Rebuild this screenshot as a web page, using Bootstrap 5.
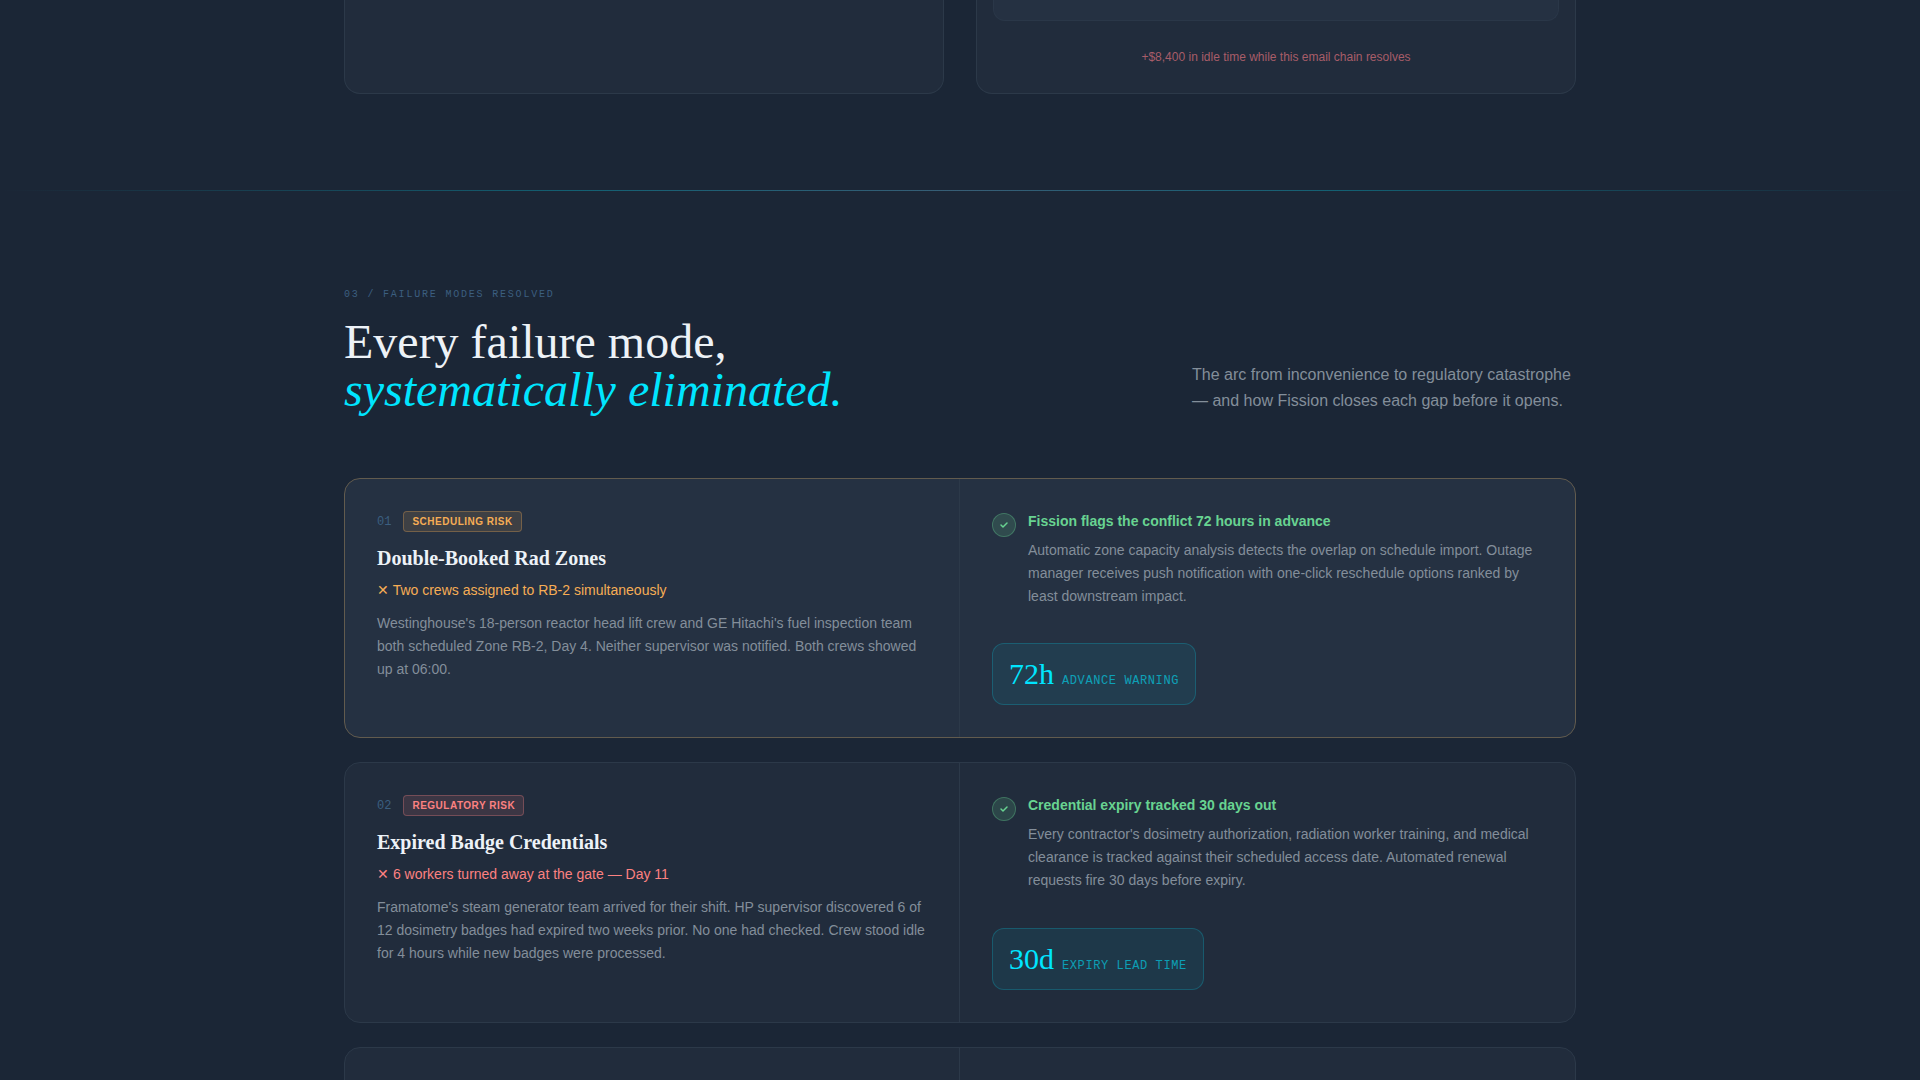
<!DOCTYPE html>
<html lang="en" data-bs-theme="dark">
<head>
<meta charset="utf-8">
<meta name="viewport" content="width=device-width, initial-scale=1">
<title>Fission – Failure modes resolved</title>
<link href="https://cdn.jsdelivr.net/npm/bootstrap@5.3.0/dist/css/bootstrap.min.css" rel="stylesheet">
<style>
  :root {
    --ink: #1b2636;
    --cyan: #00e5ff;
    --amber: #f6ad55;
    --red: #fc8181;
    --green: #68d391;
    --steel: #3b5f80;
    --muted: #838e9a;
  }
  html, body { overflow: hidden; height: 100vh; }
  body {
    background: var(--ink);
    color: #edf2f7;
    font-family: "Liberation Sans", Arial, sans-serif;
  }
  .serif { font-family: "Liberation Serif", "Times New Roman", serif; }
  .mono { font-family: "Liberation Mono", "Courier New", monospace; }
  .page-wrap { max-width: 1280px; padding: 0 24px; margin: 0 auto; }
  .section-pad { padding-bottom: 96px; }

  .panel {
    background: #212c3c;
    border: 1px solid #2c3949;
    border-radius: 16px;
  }
  .panel-pair { gap: 32px; }
  .compare-panel { border-top: 0; border-radius: 0 0 16px 16px; min-height: 94px; padding: 0 16px 28px; }
  .mail-box {
    height: 21px;
    background: #253142;
    border: 1px solid #2a3748;
    border-top: 0;
    border-radius: 0 0 12px 12px;
  }
  .idle-cost { font-size: 12px; line-height: 16px; margin-top: 28px; color: #a85d69; }

  .glow-line {
    height: 1px;
    background: linear-gradient(90deg, transparent, rgba(0, 229, 255, .3) 30%, rgba(74, 130, 160, .6) 50%, rgba(0, 229, 255, .3) 70%, transparent);
  }

  .failures { padding-top: 96px; }
  .eyebrow { font-size: 10px; line-height: 15px; letter-spacing: .18em; color: var(--steel); }
  .headline { font-size: 48px; line-height: 48px; color: #edf2f7; }
  .headline em { color: var(--cyan); }
  .intro { width: 384px; font-size: 16px; line-height: 26px; color: var(--muted); }
  .failure-head { margin-bottom: 64px; }

  .failure-list { gap: 24px; }
  .failure.active { background: #253142; border-color: #625b4e; }
  .half { padding: 32px; }
  .half-left { border-right: 1px solid #2c3949; }
  .tag-row, .fix-row { gap: 12px; }
  .num { font-size: 12px; line-height: 16px; color: var(--steel); }
  .risk {
    font-size: 10px; line-height: 15px; font-weight: 700; letter-spacing: .05em;
    padding: 2px 8px; border: 1px solid; border-radius: 4px;
  }
  .risk-amber { color: var(--amber); background: rgba(246, 173, 85, .12); border-color: rgba(246, 173, 85, .3); }
  .risk-red { color: var(--red); background: rgba(252, 129, 129, .12); border-color: rgba(252, 129, 129, .3); }
  .case-title { font-size: 20px; line-height: 28px; font-weight: 700; margin: 12px 0 8px; color: #edf2f7; }
  .case-line { font-size: 14px; line-height: 20px; margin-bottom: 12px; }
  .line-amber { color: var(--amber); }
  .line-red { color: var(--red); }
  .copy { font-size: 14px; line-height: 1.65; color: var(--muted); }
  .tick {
    width: 24px; height: 24px; margin-top: 2px;
    background: rgba(104, 211, 145, .16);
    border: 1px solid rgba(104, 211, 145, .32);
  }
  .fix-title { font-size: 14px; line-height: 20px; font-weight: 700; color: var(--green); margin-bottom: 8px; }
  .stat {
    margin-top: 35px; padding: 12px 16px; gap: 8px;
    background: rgba(0, 229, 255, .07);
    border: 1px solid rgba(0, 229, 255, .2);
    border-radius: 12px;
  }
  .stat-value { font-size: 30px; line-height: 36px; color: var(--cyan); }
  .stat-label { font-size: 12px; line-height: 16px; letter-spacing: .05em; color: rgba(0, 229, 255, .6); }
</style>
</head>
<body>
<section class="section-pad">
  <div class="page-wrap">
    <div class="panel-pair d-flex">
      <div class="w-50 panel compare-panel"></div>
      <div class="w-50 panel compare-panel">
        <div class="mail-box"></div>
        <p class="idle-cost text-center mb-0">+$8,400 in idle time while this email chain resolves</p>
      </div>
    </div>
  </div>
</section>
<div class="glow-line"></div>

<section class="failures">
  <div class="page-wrap">
    <header class="failure-head d-flex justify-content-between align-items-end">
      <div>
        <div class="eyebrow mono text-uppercase mb-3">03 / Failure modes resolved</div>
        <h2 class="headline serif fw-normal mb-0">Every failure mode,<br><em>systematically eliminated.</em></h2>
      </div>
      <p class="intro mb-0">The arc from inconvenience to regulatory catastrophe — and how Fission closes each gap before it opens.</p>
    </header>

    <div class="failure-list d-flex flex-column">
      <article class="failure active panel">
        <div class="row g-0">
          <div class="col-6 half half-left">
            <div class="tag-row d-flex align-items-center">
              <span class="num mono">01</span>
              <span class="risk risk-amber text-uppercase">Scheduling risk</span>
            </div>
            <h3 class="case-title serif">Double-Booked Rad Zones</h3>
            <p class="case-line line-amber">✕ Two crews assigned to RB-2 simultaneously</p>
            <p class="copy mb-0">Westinghouse's 18-person reactor head lift crew and GE Hitachi's fuel inspection team both scheduled Zone RB-2, Day 4. Neither supervisor was notified. Both crews showed up at 06:00.</p>
          </div>
          <div class="col-6 half d-flex flex-column align-items-start">
            <div class="fix-row d-flex">
              <span class="tick rounded-circle d-flex align-items-center justify-content-center flex-shrink-0">
                <svg width="10" height="10" viewBox="0 0 10 10" fill="none" stroke="#68d391" stroke-width="1.5" stroke-linecap="round" stroke-linejoin="round" aria-hidden="true"><path d="M2 5l2 2 4-4"/></svg>
              </span>
              <div>
                <h4 class="fix-title">Fission flags the conflict 72 hours in advance</h4>
                <p class="copy mb-0">Automatic zone capacity analysis detects the overlap on schedule import. Outage manager receives push notification with one-click reschedule options ranked by least downstream impact.</p>
              </div>
            </div>
            <div class="stat d-inline-flex align-items-baseline">
              <span class="stat-value serif">72h</span>
              <span class="stat-label mono text-uppercase">Advance warning</span>
            </div>
          </div>
        </div>
      </article>

      <article class="failure panel">
        <div class="row g-0">
          <div class="col-6 half half-left">
            <div class="tag-row d-flex align-items-center">
              <span class="num mono">02</span>
              <span class="risk risk-red text-uppercase">Regulatory risk</span>
            </div>
            <h3 class="case-title serif">Expired Badge Credentials</h3>
            <p class="case-line line-red">✕ 6 workers turned away at the gate — Day 11</p>
            <p class="copy mb-0">Framatome's steam generator team arrived for their shift. HP supervisor discovered 6 of 12 dosimetry badges had expired two weeks prior. No one had checked. Crew stood idle for 4 hours while new badges were processed.</p>
          </div>
          <div class="col-6 half d-flex flex-column align-items-start">
            <div class="fix-row d-flex">
              <span class="tick rounded-circle d-flex align-items-center justify-content-center flex-shrink-0">
                <svg width="10" height="10" viewBox="0 0 10 10" fill="none" stroke="#68d391" stroke-width="1.5" stroke-linecap="round" stroke-linejoin="round" aria-hidden="true"><path d="M2 5l2 2 4-4"/></svg>
              </span>
              <div>
                <h4 class="fix-title">Credential expiry tracked 30 days out</h4>
                <p class="copy mb-0">Every contractor's dosimetry authorization, radiation worker training, and medical clearance is tracked against their scheduled access date. Automated renewal requests fire 30 days before expiry.</p>
              </div>
            </div>
            <div class="stat d-inline-flex align-items-baseline">
              <span class="stat-value serif">30d</span>
              <span class="stat-label mono text-uppercase">Expiry lead time</span>
            </div>
          </div>
        </div>
      </article>

      <article class="failure panel">
        <div class="row g-0">
          <div class="col-6 half half-left"></div>
          <div class="col-6 half"></div>
        </div>
      </article>
    </div>
  </div>
</section>
<script src="https://cdn.jsdelivr.net/npm/bootstrap@5.3.0/dist/js/bootstrap.bundle.min.js"></script>
</body>
</html>
